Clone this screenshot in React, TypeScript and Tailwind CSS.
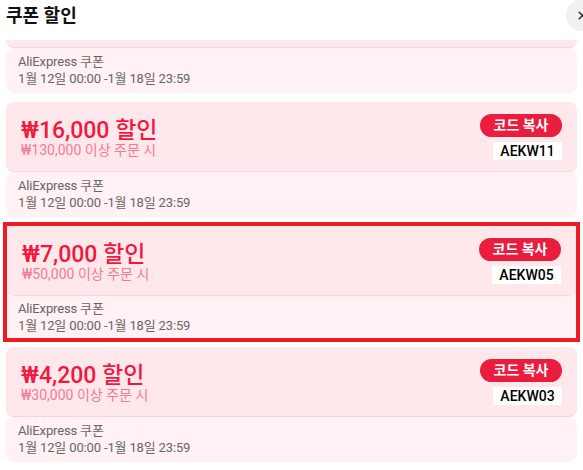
import React from "react";
import { X } from "lucide-react";

const coupons = [
  { amount: "₩20,000 할인", min: "₩170,000 이상 주문 시", code: "AEKW15" },
  { amount: "₩16,000 할인", min: "₩130,000 이상 주문 시", code: "AEKW11" },
  { amount: "₩7,000 할인", min: "₩50,000 이상 주문 시", code: "AEKW05", active: true },
  { amount: "₩4,200 할인", min: "₩30,000 이상 주문 시", code: "AEKW03" },
];

function CouponTop({ amount, min, code }: { amount: string; min: string; code: string }) {
  return (
    <div className="flex items-center justify-between pl-[15px] pr-[15px] h-full">
      <div className="flex flex-col pt-[2px]">
        <span className="text-[23px] leading-[25px] font-medium text-[#f2183d]">{amount}</span>
        <span className="text-[14px] leading-[15px] text-[#f57a91]">{min}</span>
      </div>
      <div className="flex flex-col items-end gap-[5px]">
        <button className="w-[82px] h-[23px] rounded-full bg-[#ea1d3e] text-white text-[14px] font-bold leading-[23px]">
          코드 복사
        </button>
        <span className="bg-white w-[69px] h-[18px] text-center text-[14px] leading-[18px] font-medium text-black">
          {code}
        </span>
      </div>
    </div>
  );
}

function CouponBottom() {
  return (
    <div className="text-[13px] leading-[17px] text-[#666] tracking-[-0.15px]">
      <div>AliExpress 쿠폰</div>
      <div>1월 12일 00:00 -1월 18일 23:59</div>
    </div>
  );
}

export default function App() {
  return (
    <div
      className="relative w-[583px] h-[470px] bg-white overflow-hidden"
      style={{ fontFamily: '"Roboto", "Noto Sans CJK KR", sans-serif' }}
    >
      <div className="h-[40px] pl-[6px] leading-[32px] text-[18px] font-bold text-[#111]">쿠폰 할인</div>
      <div className="absolute right-[-15px] top-[-1px] w-[32px] h-[32px] rounded-full bg-[#f1f1f1] flex items-center justify-center">
        <X size={13} strokeWidth={2.6} className="text-[#222]" />
      </div>

      <div className="h-[430px] overflow-hidden">
        <div className="-mt-[62px] px-[6px] flex flex-col gap-[9px]">
          {coupons.map((c) =>
            c.active ? (
              <div key={c.code} className="-mx-[3px] -my-[4px] border-4 border-[#ec1c24]">
                <div className="h-[69px] bg-[#fee8ec]">
                  <CouponTop {...c} />
                </div>
                <div className="bg-[#fff1f4]">
                  <div className="mx-[6px] h-px bg-[#fbd3dc]" />
                  <div className="h-[42px] pt-[4px] pl-[11px]">
                    <CouponBottom />
                  </div>
                </div>
              </div>
            ) : (
              <div key={c.code} className="flex flex-col">
                <div className="h-[70px] rounded-lg bg-[#fee8ec] border-b border-[#fbd3dc]">
                  <CouponTop {...c} />
                </div>
                <div className="h-[45px] rounded-lg bg-[#fff1f4] py-[5px] pl-[12px]">
                  <CouponBottom />
                </div>
              </div>
            )
          )}
        </div>
      </div>
    </div>
  );
}
